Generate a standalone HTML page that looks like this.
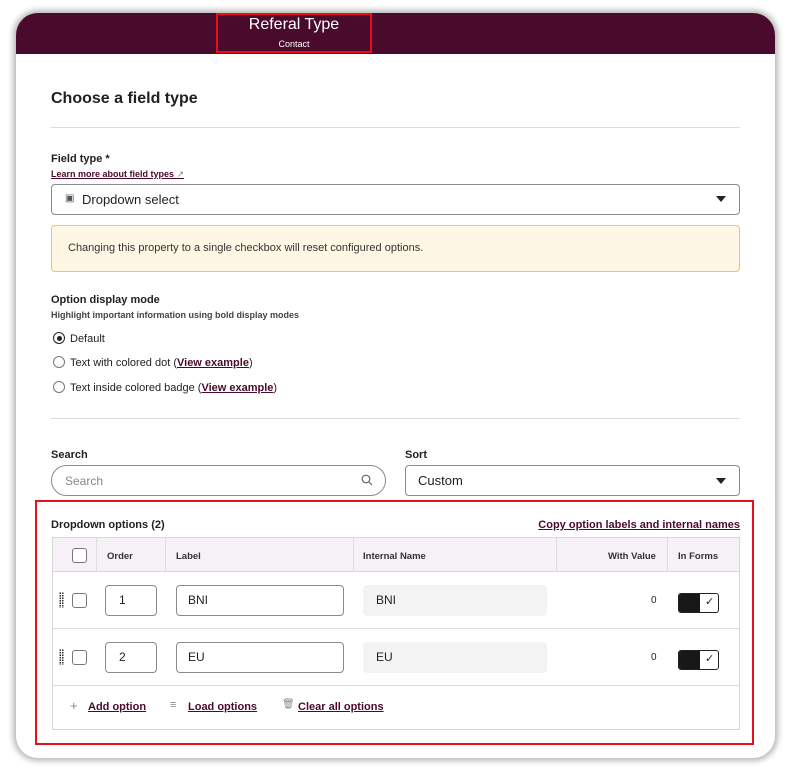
<!DOCTYPE html>
<html><head><style>
*{box-sizing:border-box;margin:0;padding:0}
body{width:786px;height:772px;background:#fff;font-family:"Liberation Sans",sans-serif;color:#1f1f1f;position:relative;overflow:hidden}
.card{position:absolute;left:16px;top:13px;width:759px;height:745px;border-radius:22px;background:#fff;box-shadow:0 0 6px 3px rgba(0,0,0,.28);overflow:hidden}
.hdr{position:absolute;left:0;top:0;width:100%;height:41px;background:#4a0a2b}
.a{position:absolute}
.red{border:2px solid #e5101a}
.lbl{font-size:11px;font-weight:bold}
.link{color:#4a0a2b;text-decoration:underline;font-weight:bold}
.inp{border:1px solid #8a8a8a;border-radius:4px;background:#fff}
.cb{width:15px;height:15px;border:1.5px solid #777;border-radius:3px;background:#fff}
.th{font-size:9.5px;font-weight:bold;color:#333}
.radio{width:12px;height:12px;border:1px solid #777;border-radius:50%}
.tog{width:41px;height:20px;border:1.5px solid #222;border-radius:3px;background:#fff;overflow:hidden}
.tog i{position:absolute;left:0;top:0;width:21px;height:18px;background:#181818}
</style></head><body>
<div class="card">
 <div class="hdr"></div>
</div>
<div class="a red" style="left:216px;top:13px;width:156px;height:40px"></div>
<div class="a" style="left:216px;top:16px;width:156px;text-align:center;color:#fff;font-size:16px">Referal Type</div>
<div class="a" style="left:216px;top:39px;width:156px;text-align:center;color:#fff;font-size:9px">Contact</div>

<div class="a" style="left:51px;top:90px;font-size:16px;font-weight:bold">Choose a field type</div>
<div class="a" style="left:51px;top:127px;width:689px;height:1px;background:#ddd"></div>
<div class="a lbl" style="left:51px;top:153px">Field type *</div>
<div class="a link" style="left:51px;top:169px;font-size:9px">Learn more about field types <span style="color:#888;font-weight:normal;text-decoration:none">↗</span></div>
<div class="a inp" style="left:51px;top:184px;width:689px;height:31px"></div>
<div class="a" style="left:65px;top:193px;font-size:10px;color:#555">▣</div>
<div class="a" style="left:82px;top:192px;font-size:13px">Dropdown select</div>
<div class="a" style="left:716px;top:196px;width:0;height:0;border-left:5px solid transparent;border-right:5px solid transparent;border-top:6px solid #222"></div>
<div class="a" style="left:51px;top:225px;width:689px;height:47px;background:#fdf7e3;border:1px solid #e8c66a;border-radius:4px"></div>
<div class="a" style="left:68px;top:242px;font-size:11px;color:#333">Changing this property to a single checkbox will reset configured options.</div>
<div class="a lbl" style="left:51px;top:294px">Option display mode</div>
<div class="a" style="left:51px;top:310px;font-size:9px;font-weight:bold;color:#444">Highlight important information using bold display modes</div>
<div class="a radio" style="left:53px;top:332px;border-color:#222"></div>
<div class="a" style="left:56.5px;top:335.5px;width:5px;height:5px;border-radius:50%;background:#222"></div>
<div class="a" style="left:70px;top:333px;font-size:11px">Default</div>
<div class="a radio" style="left:53px;top:356px"></div>
<div class="a" style="left:70px;top:357px;font-size:11px">Text with colored dot (<span class="link">View example</span>)</div>
<div class="a radio" style="left:53px;top:381px"></div>
<div class="a" style="left:70px;top:382px;font-size:11px">Text inside colored badge (<span class="link">View example</span>)</div>
<div class="a" style="left:51px;top:418px;width:689px;height:1px;background:#ddd"></div>
<div class="a lbl" style="left:51px;top:449px">Search</div>
<div class="a" style="left:51px;top:465px;width:335px;height:31px;border:1px solid #8a8a8a;border-radius:16px"></div>
<div class="a" style="left:65px;top:474px;font-size:12px;color:#888">Search</div>
<svg class="a" style="left:361px;top:474px" width="12" height="12" viewBox="0 0 12 12"><circle cx="5" cy="5" r="3.8" fill="none" stroke="#666" stroke-width="1.2"/><path d="M8 8l3 3" stroke="#666" stroke-width="1.2"/></svg>
<div class="a lbl" style="left:405px;top:449px">Sort</div>
<div class="a inp" style="left:405px;top:465px;width:335px;height:31px"></div>
<div class="a" style="left:418px;top:473px;font-size:13px">Custom</div>
<div class="a" style="left:716px;top:478px;width:0;height:0;border-left:5px solid transparent;border-right:5px solid transparent;border-top:6px solid #222"></div>

<div class="a red" style="left:35px;top:500px;width:719px;height:245px"></div>
<div class="a lbl" style="left:51px;top:519px">Dropdown options (2)</div>
<div class="a link" style="right:46px;top:519px;font-size:11px">Copy option labels and internal names</div>
<div class="a" style="left:52px;top:537px;width:688px;height:193px;border:1px solid #d6d6d6"></div>
<div class="a" style="left:53px;top:538px;width:686px;height:34px;background:#f5f1f7;border-bottom:1px solid #d6d6d6"></div>
<div class="a" style="left:96px;top:538px;width:1px;height:34px;background:#ddd"></div>
<div class="a" style="left:165px;top:538px;width:1px;height:34px;background:#ddd"></div>
<div class="a" style="left:353px;top:538px;width:1px;height:34px;background:#ddd"></div>
<div class="a" style="left:556px;top:538px;width:1px;height:34px;background:#ddd"></div>
<div class="a" style="left:667px;top:538px;width:1px;height:34px;background:#ddd"></div>
<div class="a cb" style="left:72px;top:548px"></div>
<div class="a th" style="left:107px;top:551px">Order</div>
<div class="a th" style="left:176px;top:551px">Label</div>
<div class="a th" style="left:363px;top:551px">Internal Name</div>
<div class="a th" style="left:608px;top:551px">With Value</div>
<div class="a th" style="left:678px;top:551px">In Forms</div>

<div class="a" style="left:53px;top:628px;width:686px;height:1px;background:#ddd"></div>
<div class="a" style="left:53px;top:685px;width:686px;height:1px;background:#ddd"></div>

<div class="a" style="left:59px;top:592px;width:5px;height:16px;background-image:radial-gradient(#333 40%,transparent 45%);background-size:2.5px 2.5px"></div>
<div class="a cb" style="left:72px;top:593px"></div>
<div class="a inp" style="left:105px;top:585px;width:52px;height:31px"></div>
<div class="a" style="left:119px;top:593px;font-size:12px">1</div>
<div class="a inp" style="left:176px;top:585px;width:168px;height:31px"></div>
<div class="a" style="left:188px;top:593px;font-size:12px">BNI</div>
<div class="a" style="left:363px;top:585px;width:184px;height:31px;background:#f3f3f3;border-radius:4px"></div>
<div class="a" style="left:376px;top:593px;font-size:12px">BNI</div>
<div class="a" style="left:651px;top:595px;font-size:10px">0</div>
<div class="a tog" style="left:678px;top:593px"><i></i><span style="position:absolute;left:26px;top:1px;font-size:11px">✓</span></div>

<div class="a" style="left:59px;top:649px;width:5px;height:16px;background-image:radial-gradient(#333 40%,transparent 45%);background-size:2.5px 2.5px"></div>
<div class="a cb" style="left:72px;top:650px"></div>
<div class="a inp" style="left:105px;top:642px;width:52px;height:31px"></div>
<div class="a" style="left:119px;top:650px;font-size:12px">2</div>
<div class="a inp" style="left:176px;top:642px;width:168px;height:31px"></div>
<div class="a" style="left:188px;top:650px;font-size:12px">EU</div>
<div class="a" style="left:363px;top:642px;width:184px;height:31px;background:#f3f3f3;border-radius:4px"></div>
<div class="a" style="left:376px;top:650px;font-size:12px">EU</div>
<div class="a" style="left:651px;top:652px;font-size:10px">0</div>
<div class="a tog" style="left:678px;top:650px"><i></i><span style="position:absolute;left:26px;top:1px;font-size:11px">✓</span></div>

<div class="a" style="left:70px;top:698px;font-size:13px;color:#888">+</div>
<div class="a link" style="left:88px;top:701px;font-size:11px">Add option</div>
<div class="a" style="left:170px;top:699px;font-size:11px;color:#888">≡</div>
<div class="a link" style="left:188px;top:701px;font-size:11px">Load options</div>
<div class="a" style="left:282px;top:699px;font-size:10px;color:#888">🗑</div>
<div class="a link" style="left:298px;top:701px;font-size:11px">Clear all options</div>
</body></html>
